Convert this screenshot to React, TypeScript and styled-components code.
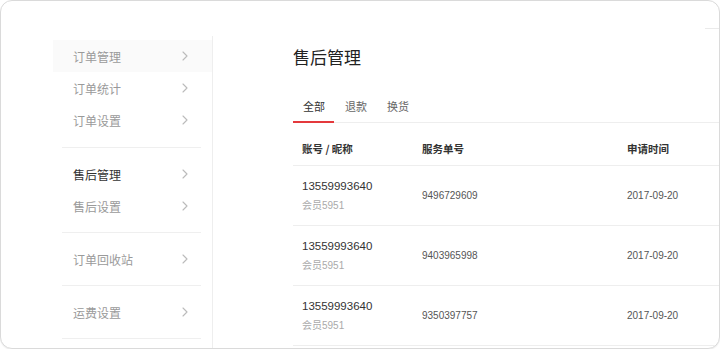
import styled, { createGlobalStyle } from "styled-components";

type MenuItem = {
  label: string;
  active?: boolean;
  current?: boolean;
};

type Row = {
  account: string;
  nick: string;
  serviceNo: string;
  date: string;
};

const MENU_GROUPS: MenuItem[][] = [
  [
    { label: "订单管理", current: true },
    { label: "订单统计" },
    { label: "订单设置" },
  ],
  [{ label: "售后管理", active: true }, { label: "售后设置" }],
  [{ label: "订单回收站" }],
  [{ label: "运费设置" }],
];

const TABS = ["全部", "退款", "换货"];

const ROWS: Row[] = [
  { account: "13559993640", nick: "会员5951", serviceNo: "9496729609", date: "2017-09-20" },
  { account: "13559993640", nick: "会员5951", serviceNo: "9403965998", date: "2017-09-20" },
  { account: "13559993640", nick: "会员5951", serviceNo: "9350397757", date: "2017-09-20" },
];

const GlobalStyle = createGlobalStyle`
  html, body {
    margin: 0;
    padding: 0;
    background: #ffffff;
  }
  body {
    font-family: "Liberation Sans", "Noto Sans CJK SC", sans-serif;
    color: #333;
  }
`;

const Chevron = () => (
  <svg width="6" height="10" viewBox="0 0 6 10">
    <polyline
      points="1,1 5,5 1,9"
      fill="none"
      stroke="#bbb"
      strokeWidth="1.1"
      strokeLinecap="round"
      strokeLinejoin="round"
    />
  </svg>
);

const App = () => {
  return (
    <>
      <GlobalStyle />
      <StyledCard>
        <StyledSidebar>
          {MENU_GROUPS.map((group, gi) => (
            <StyledGroup key={gi} $first={gi === 0}>
              {group.map((item) => (
                <StyledMenuItem
                  key={item.label}
                  $active={item.active}
                  $current={item.current}
                >
                  <span>{item.label}</span>
                  <Chevron />
                </StyledMenuItem>
              ))}
            </StyledGroup>
          ))}
        </StyledSidebar>
        <StyledMain>
          <StyledTopStrip>
            <StyledStub />
          </StyledTopStrip>
          <StyledTitle>售后管理</StyledTitle>
          <StyledTabs>
            {TABS.map((tab, i) => (
              <StyledTab key={tab} $active={i === 0}>
                {tab}
              </StyledTab>
            ))}
          </StyledTabs>
          <StyledTable>
            <StyledHeadRow>
              <StyledHeadCell>账号 / 昵称</StyledHeadCell>
              <StyledHeadCell>服务单号</StyledHeadCell>
              <StyledHeadCell>申请时间</StyledHeadCell>
            </StyledHeadRow>
            {ROWS.map((row, i) => (
              <StyledRow key={i}>
                <StyledAccount>
                  <StyledAccountNo>{row.account}</StyledAccountNo>
                  <StyledNick>{row.nick}</StyledNick>
                </StyledAccount>
                <StyledCell>{row.serviceNo}</StyledCell>
                <StyledCell>{row.date}</StyledCell>
              </StyledRow>
            ))}
          </StyledTable>
        </StyledMain>
      </StyledCard>
    </>
  );
};

const StyledCard = styled.div`
  box-sizing: border-box;
  width: 720px;
  height: 349px;
  border: 1px solid #dadada;
  border-radius: 12px;
  box-shadow: 0 1px 1px rgba(0, 0, 0, 0.06);
  background: #fff;
  overflow: hidden;
  display: flex;
  align-items: stretch;
`;

const StyledSidebar = styled.div`
  width: 159px;
  margin: 35px 0 0 52px;
  border-right: 1px solid #eeeeee;
  display: flex;
  flex-direction: column;
  flex-shrink: 0;
`;

const StyledGroup = styled.div<{ $first?: boolean }>`
  padding: ${({ $first }) => ($first ? "4px 0 11px" : "10px 0")};
  &::after {
    content: "";
    display: block;
    height: 1px;
    background: #efefef;
    margin: 0 11px 0 9px;
    transform: translateY(${({ $first }) => ($first ? "11px" : "10px")});
  }
`;

const StyledMenuItem = styled.div<{ $active?: boolean; $current?: boolean }>`
  height: 32px;
  display: flex;
  align-items: center;
  justify-content: space-between;
  padding: 0 24px 0 20px;
  font-family: "Noto Sans CJK SC", sans-serif;
  font-size: 12px;
  color: ${({ $active }) => ($active ? "#333" : "#9a9a9a")};
  background: ${({ $current }) => ($current ? "#fafafa" : "transparent")};
`;

const StyledMain = styled.div`
  flex: 1;
  min-width: 0;
  padding-left: 80px;
  display: flex;
  flex-direction: column;
`;

const StyledTopStrip = styled.div`
  height: 28px;
  display: flex;
  justify-content: flex-end;
  align-items: flex-end;
`;

const StyledStub = styled.div`
  width: 14px;
  border-bottom: 1px solid #eaeaea;
`;

const StyledTitle = styled.h1`
  margin: 16px 0 0;
  height: 24px;
  line-height: 24px;
  font-family: "Noto Sans CJK SC", sans-serif;
  font-size: 17px;
  font-weight: 400;
  color: #222;
`;

const StyledTabs = styled.div`
  margin-top: 22px;
  display: flex;
  gap: 1px;
  border-bottom: 1px solid #eeeeee;
`;

const StyledTab = styled.div<{ $active?: boolean }>`
  height: 30px;
  line-height: 30px;
  padding: 0 9px 0 10px;
  margin-bottom: -1px;
  font-family: "Noto Sans CJK SC", sans-serif;
  font-size: 11px;
  color: ${({ $active }) => ($active ? "#333" : "#666")};
  border-bottom: 2px solid ${({ $active }) => ($active ? "#e4393c" : "transparent")};
`;

const StyledTable = styled.div`
  display: flex;
  flex-direction: column;
`;

const StyledHeadRow = styled.div`
  display: grid;
  grid-template-columns: 120px 205px 1fr;
  padding-top: 10px;
  height: 32px;
  border-bottom: 1px solid #eeeeee;
`;

const StyledHeadCell = styled.div`
  padding-left: 9px;
  line-height: 32px;
  font-family: "Noto Sans CJK SC", sans-serif;
  font-size: 10.5px;
  font-weight: 700;
  color: #333;
  white-space: nowrap;
`;

const StyledRow = styled.div`
  display: grid;
  grid-template-columns: 120px 205px 1fr;
  height: 59px;
  border-bottom: 1px solid #eeeeee;
  align-items: center;
`;

const StyledAccount = styled.div`
  padding-left: 9px;
  display: flex;
  flex-direction: column;
  gap: 4px;
`;

const StyledAccountNo = styled.div`
  font-size: 11.5px;
  line-height: 16px;
  color: #333;
`;

const StyledNick = styled.div`
  font-size: 10px;
  line-height: 16px;
  color: #aaa;
`;

const StyledCell = styled.div`
  padding-left: 9px;
  font-size: 10px;
  color: #555;
`;

export default App;
